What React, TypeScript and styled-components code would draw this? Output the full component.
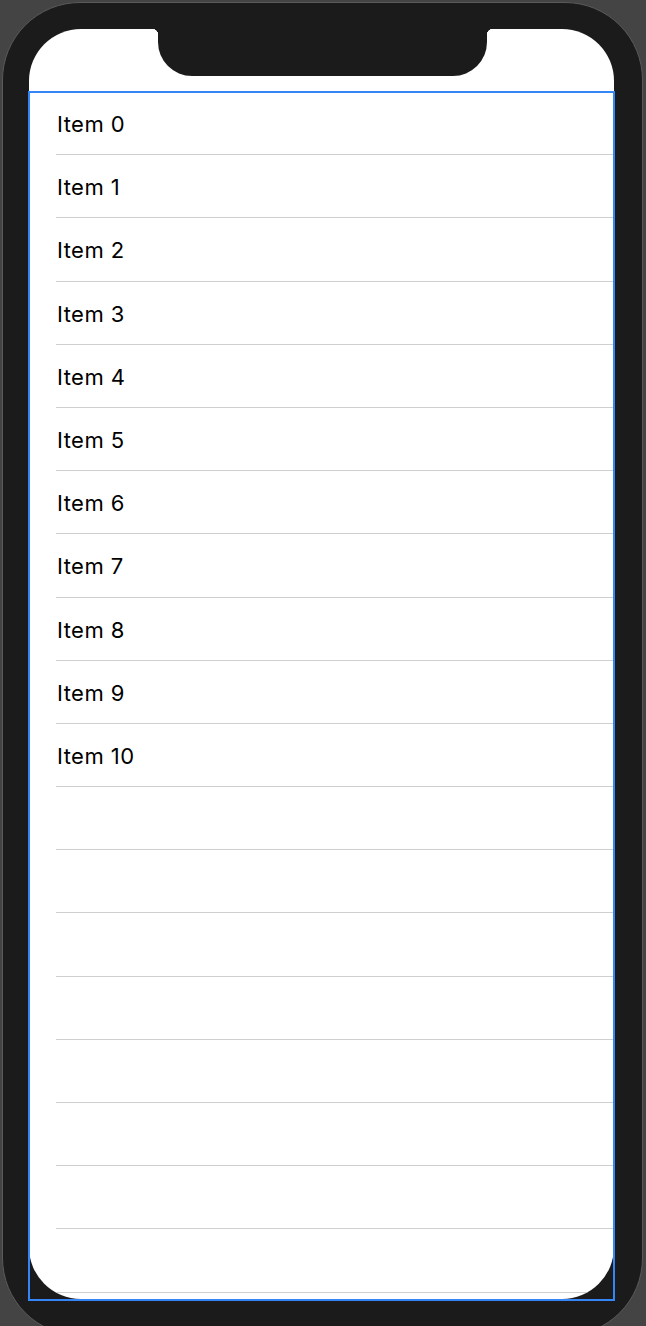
import React from "react";
import styled, { createGlobalStyle } from "styled-components";

const Global = createGlobalStyle`
  html, body { margin: 0; padding: 0; background: #444444; overflow: hidden; }
  body { font-family: Inter, "Noto Sans", "Liberation Sans", sans-serif; }
`;

const Device = styled.div`
  position: relative;
  box-sizing: border-box;
  margin: 2px 0 0 2px;
  width: 641px;
  height: 1334px;
  border-radius: 78px;
  background: #1b1b1b;
  border: 1px solid #5a5a5a;
  padding: 26px 0 0 26px;
`;

const Screen = styled.div`
  position: relative;
  width: 585px;
  height: 1270px;
  background: #ffffff;
  border-radius: 52px;
  overflow: hidden;
  display: flex;
  flex-direction: column;
`;

const Notch = styled.div`
  position: absolute;
  top: 0;
  left: 129px;
  width: 329px;
  height: 47px;
  background: #1b1b1b;
  border-radius: 0 0 34px 34px;
  &::before,
  &::after {
    content: "";
    position: absolute;
    top: 0;
    width: 6px;
    height: 6px;
  }
  &::before {
    left: -6px;
    background: radial-gradient(circle at 0 100%, transparent 6px, #1b1b1b 6.5px);
  }
  &::after {
    right: -6px;
    background: radial-gradient(circle at 100% 100%, transparent 6px, #1b1b1b 6.5px);
  }
`;

const StatusArea = styled.div`
  flex: 0 0 63px;
`;

const List = styled.ul`
  list-style: none;
  margin: 0;
  padding: 0;
  flex: 1;
`;

const Row = styled.li`
  height: 63.2px;
  box-sizing: border-box;
  margin-left: 27px;
  padding-left: 1px;
  padding-top: 2px;
  display: flex;
  align-items: center;
  border-bottom: 1px solid #cfcfd2;
  font-size: 22px;
  color: #000;
  letter-spacing: 0.45px;
`;

const Highlight = styled.div`
  position: absolute;
  left: 25px;
  top: 88px;
  width: 587px;
  height: 1210px;
  box-sizing: border-box;
  border: 2px solid #3485f7;
  pointer-events: none;
`;

const items = Array.from({ length: 20 }, (_, i) => (i <= 10 ? `Item ${i}` : ""));

export default function App() {
  return (
    <>
      <Global />
      <Device>
        <Screen>
          <Notch />
          <StatusArea />
          <List>
            {items.map((t, i) => (
              <Row key={i}>{t}</Row>
            ))}
          </List>
        </Screen>
        <Highlight />
      </Device>
    </>
  );
}
